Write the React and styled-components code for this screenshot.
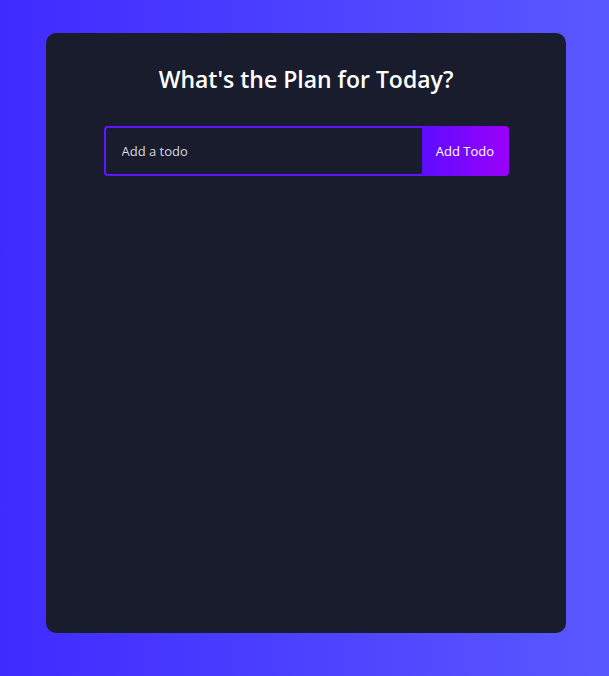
import React, { useState } from 'react'
import styled, { createGlobalStyle } from 'styled-components'

const GlobalStyle = createGlobalStyle`
  * {
    box-sizing: border-box;
  }
  html, body {
    margin: 0;
    padding: 0;
    height: 100%;
  }
  body {
    font-family: "Open Sans", "DejaVu Sans", sans-serif;
    background: linear-gradient(90deg, #3f2bff 0%, #5a58ff 100%);
    min-height: 676px;
  }
`

const Page = styled.div`
  padding: 33px 0 0 46px;
`

const TodoApp = styled.div`
  display: flex;
  flex-direction: column;
  align-items: center;
  width: 520px;
  height: 600px;
  background: #181c2c;
  border-radius: 10px;
  text-align: center;
`

const Title = styled.h1`
  margin: 30px 0 31px;
  color: #fff;
  font-size: 23px;
  font-weight: 600;
  line-height: 32px;
`

const Form = styled.form`
  display: flex;
  width: 405px;
  height: 50px;
`

const Input = styled.input`
  flex: 1;
  min-width: 0;
  padding: 0 16px;
  border: 2px solid #5d16ff;
  border-right: none;
  border-radius: 4px 0 0 4px;
  outline: none;
  background: transparent;
  color: #fff;
  font-family: inherit;
  font-size: 13px;

  &::placeholder {
    color: #d8d8e0;
  }
`

const Button = styled.button`
  width: 87px;
  padding: 0;
  border: none;
  border-radius: 0 4px 4px 0;
  background: linear-gradient(90deg, #5d0cff 0%, #9b00fa 100%);
  color: #fff;
  font-family: inherit;
  font-size: 13px;
  cursor: pointer;
`

export default function App() {
  const [text, setText] = useState('')

  return (
    <>
      <GlobalStyle />
      <Page>
        <TodoApp>
          <Title>What's the Plan for Today?</Title>
          <Form onSubmit={e => { e.preventDefault(); setText('') }}>
            <Input
              placeholder="Add a todo"
              value={text}
              onChange={e => setText(e.target.value)}
            />
            <Button type="submit">Add Todo</Button>
          </Form>
        </TodoApp>
      </Page>
    </>
  )
}
